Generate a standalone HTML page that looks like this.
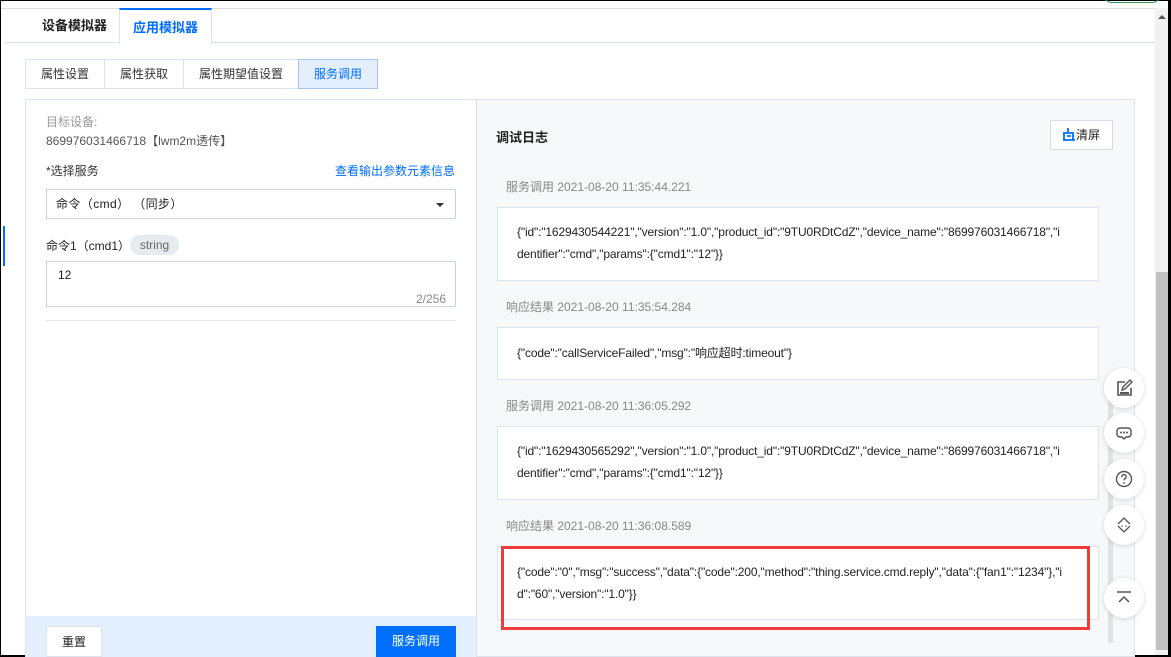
<!DOCTYPE html>
<html><head><meta charset="utf-8"><style>
*{margin:0;padding:0;box-sizing:border-box}
body{width:1171px;height:657px;overflow:hidden;background:#fff;font-family:"Liberation Sans","Noto Sans CJK SC",sans-serif;font-size:12px;color:#333;position:relative}
.a{position:absolute}
.tab{position:absolute;top:8px;height:35px;line-height:36px;font-size:13px;font-weight:bold;text-align:center}
.st{position:absolute;top:59px;height:30px;line-height:29px;font-size:12px;text-align:center;border:1px solid #dde3ea;background:#fff;color:#333}
.lbl{position:absolute;left:506px;color:#888;font-size:12px}
.box{position:absolute;left:497px;width:602px;background:#fff;border:1px solid #dde3ea;font-size:12px;color:#222;line-height:22px;padding-left:19px;letter-spacing:-0.15px;white-space:nowrap}
.fb{position:absolute;left:1104px;width:40px;height:40px;border-radius:50%;background:#fff;box-shadow:0 1px 5px rgba(0,0,0,.15);display:flex;align-items:center;justify-content:center}
</style></head><body>
<div class="a" style="left:0;top:0;width:1171px;height:1px;background:#000"></div>
<div class="a" style="left:0;top:0;width:1px;height:657px;background:#000"></div>
<div class="a" style="left:0;top:655px;width:1171px;height:2px;background:#000"></div>
<div class="a" style="left:1168px;top:0;width:3px;height:657px;background:#000"></div>
<div class="a" style="left:1px;top:8px;width:1154px;height:1px;background:#ddd"></div>
<div class="a" style="left:1103px;top:-6px;width:58px;height:9px;border:1px solid #2a9a5a;border-radius:0 0 12px 12px"></div>
<div class="a" style="left:1155px;top:8px;width:13px;height:647px;background:#f1f1f1"></div>
<div class="a" style="left:1156px;top:272px;width:12px;height:378px;background:#c1c1c1"></div>
<div class="a" style="left:1158px;top:15px;width:0;height:0;border-left:4px solid transparent;border-right:4px solid transparent;border-bottom:4px solid #555"></div>
<div class="a" style="left:5px;top:42px;width:1150px;height:1px;background:#dde3ea"></div>
<div class="tab" style="left:5px;width:114px;color:#222;text-align:left;padding-left:37px">设备模拟器</div>
<div class="tab" style="left:119px;width:93px;color:#006eff;background:#fff;border:1px solid #dde3ea;border-top:2px solid #006eff;border-bottom:none;height:36px">应用模拟器</div>
<div class="st" style="left:25px;width:80px">属性设置</div>
<div class="st" style="left:104px;width:80px">属性获取</div>
<div class="st" style="left:183px;width:116px">属性期望值设置</div>
<div class="st" style="left:298px;width:80px;background:#e3effc;border-color:#a7c6ef;color:#006eff">服务调用</div>
<div class="a" style="left:25px;top:99px;width:452px;height:558px;border:1px solid #dde3ea;background:#fff"></div>
<div class="a" style="left:3px;top:226px;width:2px;height:40px;background:#006eff"></div>
<div class="a" style="left:46px;top:113px;color:#999">目标设备:</div>
<div class="a" style="left:46px;top:132px;color:#555">869976031466718【lwm2m透传】</div>
<div class="a" style="left:46px;top:162px;color:#333">*选择服务</div>
<div class="a" style="left:335px;top:162px;color:#006eff">查看输出参数元素信息</div>
<div class="a" style="left:46px;top:189px;width:410px;height:30px;border:1px solid #ccd3dd;line-height:28px;padding-left:9px;color:#222;letter-spacing:0.4px">命令（cmd） （同步）</div>
<div class="a" style="left:436px;top:203px;width:0;height:0;border-left:4px solid transparent;border-right:4px solid transparent;border-top:4px solid #333"></div>
<div class="a" style="left:46px;top:237px;color:#222">命令1（cmd1）</div>
<div class="a" style="left:130px;top:235px;width:49px;height:20px;border-radius:10px;background:#e6ebf0;color:#666;text-align:center;line-height:20px">string</div>
<div class="a" style="left:46px;top:261px;width:410px;height:46px;border:1px solid #ccd3dd"></div>
<div class="a" style="left:58px;top:268px;color:#222">12</div>
<div class="a" style="left:416px;top:292px;color:#888">2/256</div>
<div class="a" style="left:46px;top:320px;width:410px;height:1px;background:#e5e8ec"></div>
<div class="a" style="left:26px;top:616px;width:450px;height:41px;background:#e3effc"></div>
<div class="a" style="left:46px;top:626px;width:56px;height:31px;background:#fff;border:1px solid #dde3ea;text-align:center;line-height:30px;color:#222">重置</div>
<div class="a" style="left:376px;top:626px;width:80px;height:31px;background:#006eff;color:#fff;text-align:center;line-height:30px">服务调用</div>
<div class="a" style="left:476px;top:99px;width:659px;height:558px;border:1px solid #dde3ea;background:#f7f8fa"></div>
<div class="a" style="left:496px;top:127px;font-size:13px;font-weight:bold;color:#222">调试日志</div>
<div class="a" style="left:1050px;top:120px;width:63px;height:30px;background:#fff;border:1px solid #d5dde8;line-height:28px;padding-left:11px;color:#222">
<svg width="14" height="13" viewBox="0 0 14 13" style="vertical-align:-2px"><path d="M6 0v4M1 5h11M2 5v7M1 12h12M11 5v7M5 8h4" stroke="#006eff" stroke-width="1.8" fill="none"/></svg>清屏</div>
<div class="lbl" style="top:178px">服务调用 2021-08-20 11:35:44.221</div>
<div class="box" style="top:207px;height:74px;padding-top:13px">{"id":"1629430544221","version":"1.0","product_id":"9TU0RDtCdZ","device_name":"869976031466718","i<br>dentifier":"cmd","params":{"cmd1":"12"}}</div>
<div class="lbl" style="top:298px">响应结果 2021-08-20 11:35:54.284</div>
<div class="box" style="top:327px;height:53px;padding-top:14px">{"code":"callServiceFailed","msg":"响应超时:timeout"}</div>
<div class="lbl" style="top:397px">服务调用 2021-08-20 11:36:05.292</div>
<div class="box" style="top:426px;height:74px;padding-top:13px">{"id":"1629430565292","version":"1.0","product_id":"9TU0RDtCdZ","device_name":"869976031466718","i<br>dentifier":"cmd","params":{"cmd1":"12"}}</div>
<div class="lbl" style="top:517px">响应结果 2021-08-20 11:36:08.589</div>
<div class="box" style="top:546px;height:74px;padding-top:14px">{"code":"0","msg":"success","data":{"code":200,"method":"thing.service.cmd.reply","data":{"fan1":"1234"},"i<br>d":"60","version":"1.0"}}</div>
<div class="a" style="left:501px;top:546px;width:589px;height:84px;border:3px solid #ef3b3b"></div>
<div class="a" style="left:1108px;top:395px;width:5px;height:248px;background:#e2e2e2"></div>
<div class="fb" style="top:368px"><svg width="18" height="18" viewBox="0 0 18 18"><path d="M10 3H3v13h13V9" stroke="#555" stroke-width="1.6" fill="none"/><path d="M7 11l1-3 7-7 2 2-7 7z" stroke="#555" stroke-width="1.4" fill="none"/><path d="M5 14h9" stroke="#555" stroke-width="2"/></svg></div>
<div class="fb" style="top:413px"><svg width="18" height="18" viewBox="0 0 18 18"><path d="M9 15l-2-2H5a3 3 0 01-3-3V7a3 3 0 013-3h8a3 3 0 013 3v3a3 3 0 01-3 3h-2z" stroke="#555" stroke-width="1.4" fill="none"/><circle cx="6" cy="8.5" r="1" fill="#555"/><circle cx="9" cy="8.5" r="1" fill="#555"/><circle cx="12" cy="8.5" r="1" fill="#555"/></svg></div>
<div class="fb" style="top:459px"><svg width="18" height="18" viewBox="0 0 18 18"><circle cx="9" cy="9" r="7.5" stroke="#555" stroke-width="1.4" fill="none"/><path d="M6.8 7a2.2 2.2 0 114 1c-1 .7-1.8 1-1.8 2.3" stroke="#555" stroke-width="1.4" fill="none"/><circle cx="9" cy="13" r=".9" fill="#555"/></svg></div>
<div class="fb" style="top:505px"><svg width="18" height="18" viewBox="0 0 18 18"><path d="M3 8l6-6 6 6M3 10l6 6 6-6" stroke="#555" stroke-width="1.3" fill="none"/><circle cx="7" cy="10" r=".8" fill="#555"/><circle cx="11" cy="10" r=".8" fill="#555"/></svg></div>
<div class="fb" style="top:578px"><svg width="18" height="18" viewBox="0 0 18 18"><path d="M2 3h14" stroke="#555" stroke-width="1.5"/><path d="M4 13l5-5 5 5" stroke="#555" stroke-width="1.5" fill="none"/></svg></div>
</body></html>
